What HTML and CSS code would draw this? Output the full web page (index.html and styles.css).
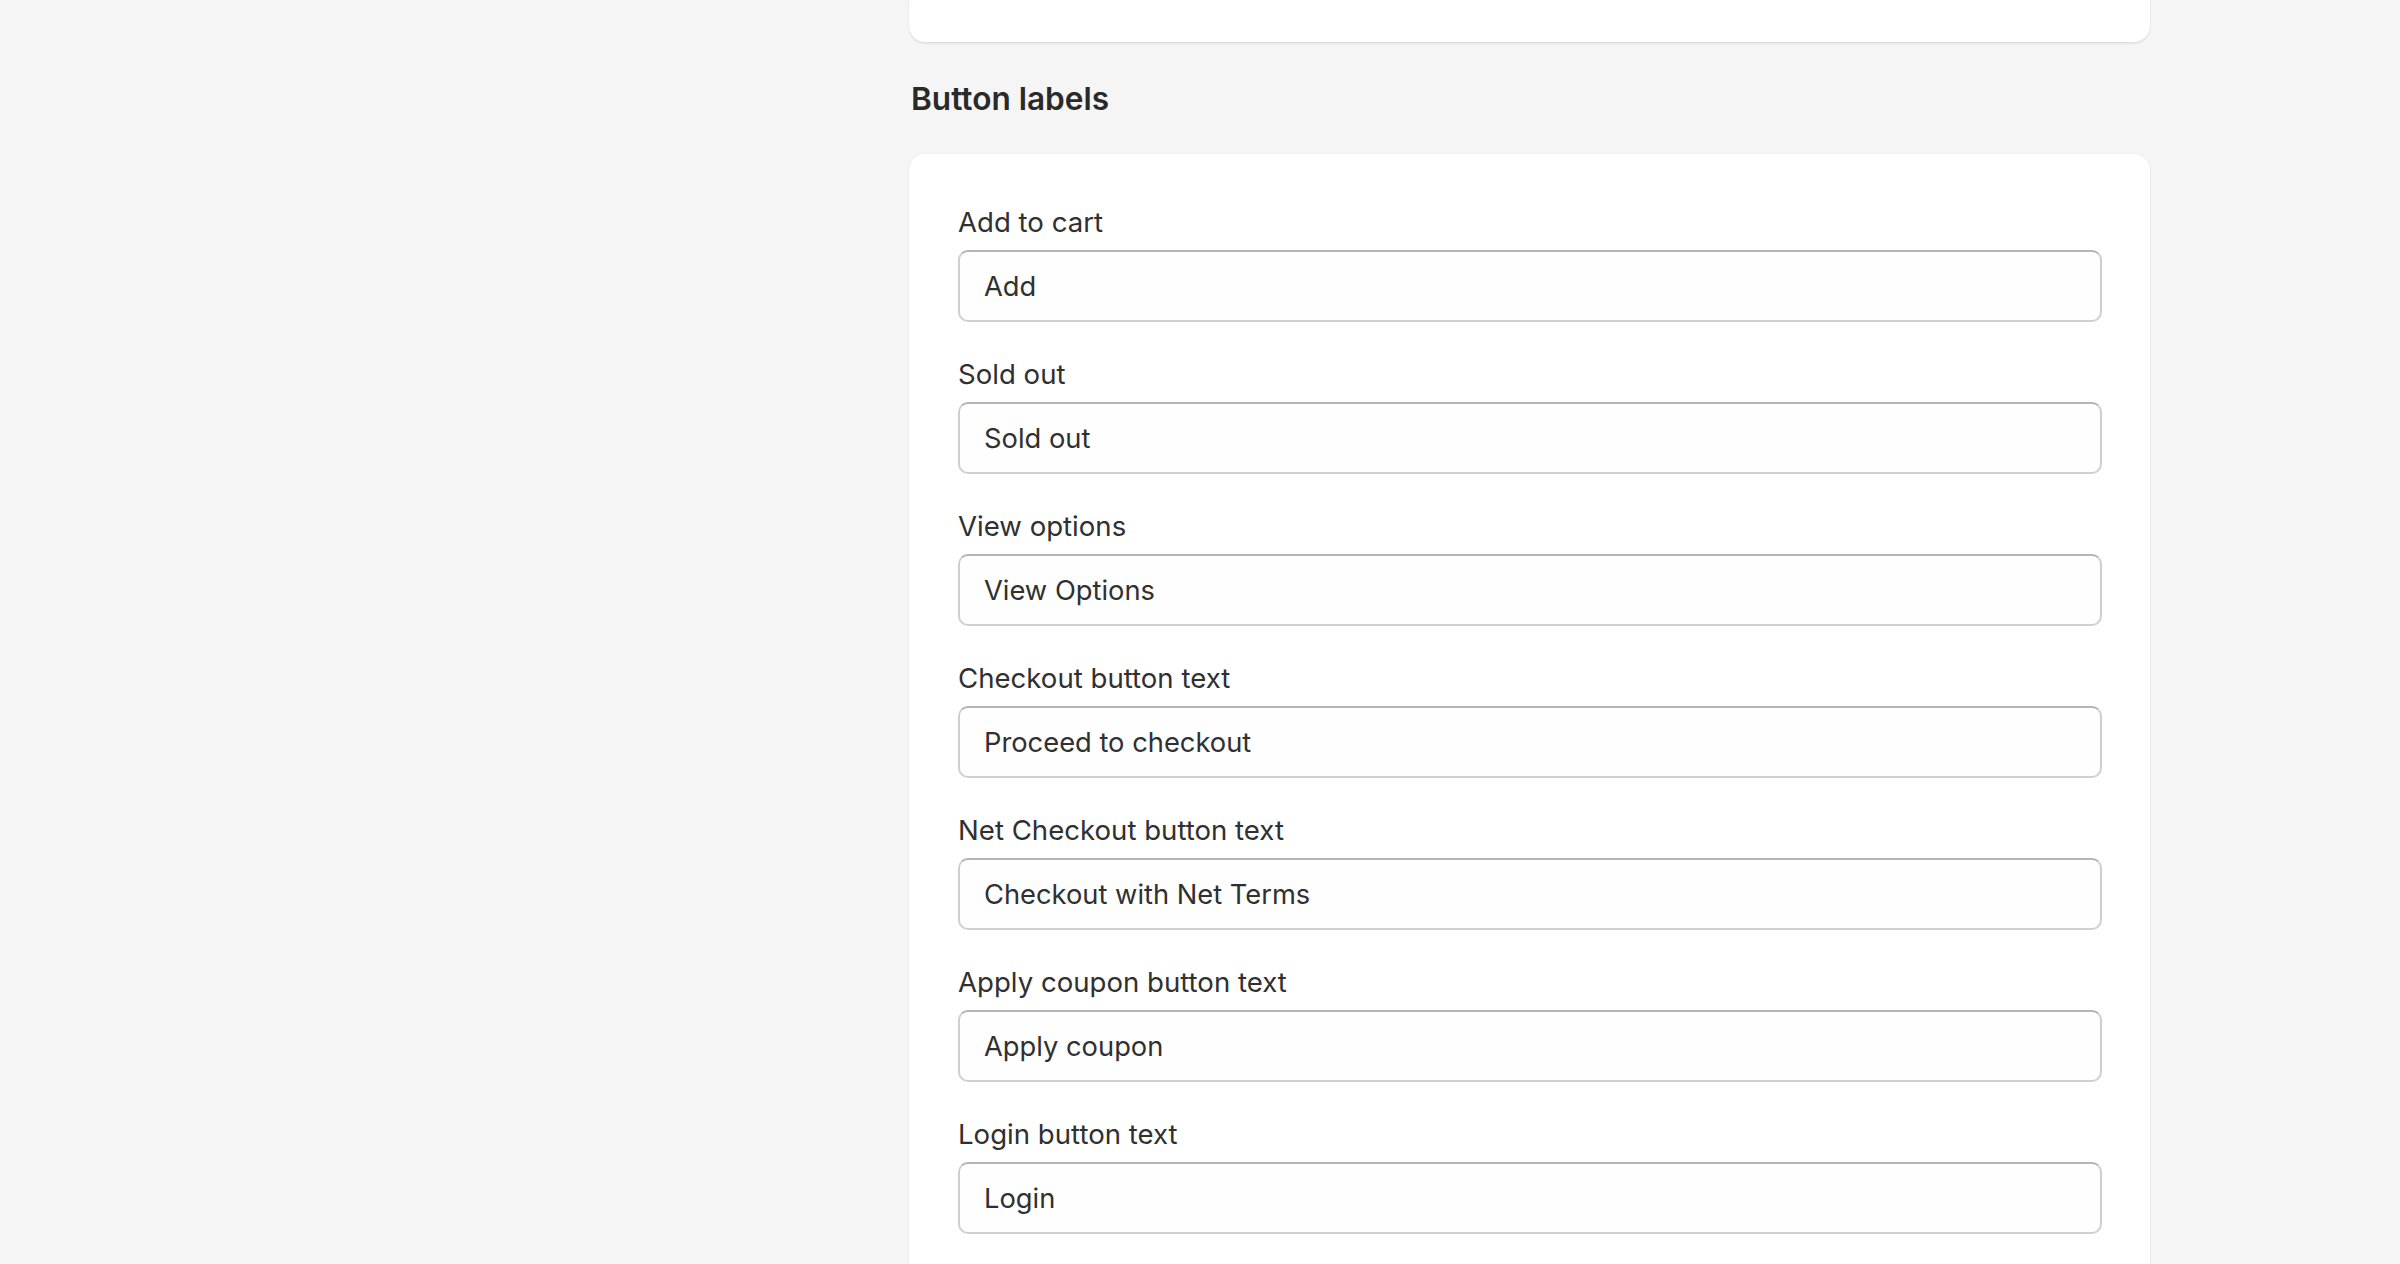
FILE: index.html
```html
<!DOCTYPE html>
<html lang="en">
<head>
<meta charset="utf-8">
<title>Button labels</title>
<link rel="stylesheet" href="styles.css">
</head>
<body>
<div class="page">
  <aside class="side"></aside>
  <main class="content">
    <div class="card card-prev"></div>
    <h2 class="section-title">Button labels</h2>
    <div class="card card-main">
      <div class="field">
        <label class="field-label" for="f1">Add to cart</label>
        <input class="field-input" id="f1" type="text" value="Add">
      </div>
      <div class="field">
        <label class="field-label" for="f2">Sold out</label>
        <input class="field-input" id="f2" type="text" value="Sold out">
      </div>
      <div class="field">
        <label class="field-label" for="f3">View options</label>
        <input class="field-input" id="f3" type="text" value="View Options">
      </div>
      <div class="field">
        <label class="field-label" for="f4">Checkout button text</label>
        <input class="field-input" id="f4" type="text" value="Proceed to checkout">
      </div>
      <div class="field">
        <label class="field-label" for="f5">Net Checkout button text</label>
        <input class="field-input" id="f5" type="text" value="Checkout with Net Terms">
      </div>
      <div class="field">
        <label class="field-label" for="f6">Apply coupon button text</label>
        <input class="field-input" id="f6" type="text" value="Apply coupon">
      </div>
      <div class="field">
        <label class="field-label" for="f7">Login button text</label>
        <input class="field-input" id="f7" type="text" value="Login">
      </div>
    </div>
  </main>
</div>
</body>
</html>
```

FILE: styles.css
```css
html, body {
  margin: 0;
  padding: 0;
  height: 100%;
  overflow: hidden;
}

body {
  background: #f5f5f5;
  color: #303030;
  font-family: Inter, "Noto Sans", "Liberation Sans", sans-serif;
  -webkit-font-smoothing: antialiased;
}

.page {
  display: grid;
  grid-template-columns: 909px 1241px;
}

.content {
  display: flex;
  flex-direction: column;
}

.card {
  background: #ffffff;
  border-radius: 16px;
  box-shadow: 0 2px 2px rgba(0, 0, 0, 0.07), 0 0 0 1px rgba(0, 0, 0, 0.025);
}

.card-prev {
  height: 42px;
  border-radius: 0 0 16px 16px;
}

.section-title {
  margin: 33px 0 31px 2px;
  font-size: 31.6px;
  line-height: 48px;
  font-weight: 600;
  color: #2a2a2a;
}

.card-main {
  padding: 48px 48px 48px 49px;
  display: flex;
  flex-direction: column;
  gap: 32px;
  border-radius: 16px 16px 0 0;
}

.field {
  display: flex;
  flex-direction: column;
  gap: 8px;
}

.field-label {
  font-size: 27.6px;
  line-height: 40px;
  color: #303030;
}

.field-input {
  box-sizing: border-box;
  height: 72px;
  width: 100%;
  margin: 0;
  padding: 0 24px;
  font-family: inherit;
  font-size: 27.3px;
  color: #303030;
  background: #fefefe;
  border: 2px solid #cdcfd2;
  border-top-color: #b2b6ba;
  border-radius: 10px;
  outline: none;
}
```
